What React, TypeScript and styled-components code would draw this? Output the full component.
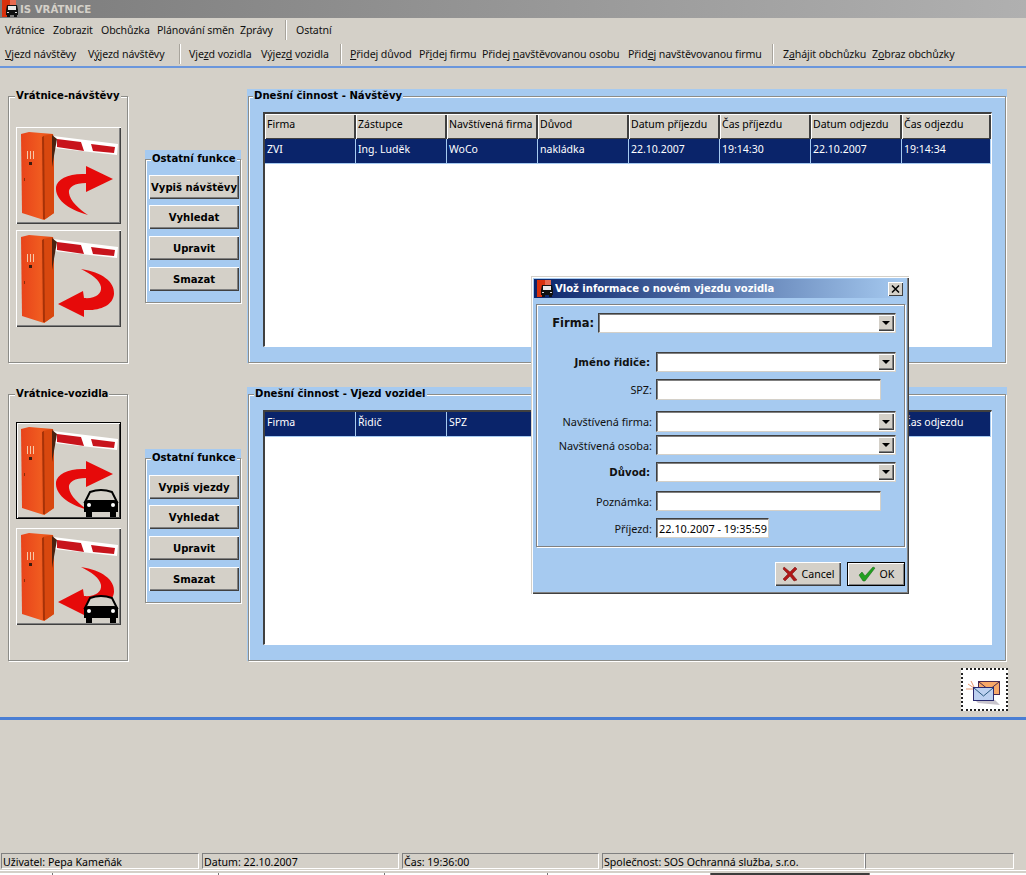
import styled, { createGlobalStyle } from "styled-components";

const FACE = "#d4d0c8";
const BLUE = "#a6caf0";
const NAVY = "#0a246a";

const GlobalStyle = createGlobalStyle`
  html, body { margin: 0; padding: 0; background: ${FACE}; }
  body { font-family: "Noto Sans", "DejaVu Sans", sans-serif; font-size: 11px; color: #000; }
`;

function TruckLogo() {
  return (
    <svg width="17" height="18" viewBox="0 0 17 18">
      <rect x="0" y="0" width="8" height="17" fill="#d8300c" />
      <rect x="8" y="0" width="6" height="5" fill="#e86a50" />
      <path d="M5 5h10l1 5v5h-1v2h-3v-2H8v2H5v-2H4v-5z" fill="#111" />
      <rect x="6" y="6" width="8" height="4" fill="#e8e8e8" />
      <rect x="5" y="12" width="2" height="1" fill="#ddd" />
      <rect x="13" y="12" width="2" height="1" fill="#ddd" />
    </svg>
  );
}

function Barrier({ out, car }: { out?: boolean; car?: boolean }) {
  return (
    <svg width="103" height="94" viewBox="0 0 103 94">
      <defs>
        <linearGradient id="cabFront" x1="0" x2="1" y1="0" y2="0">
          <stop offset="0" stopColor="#e8431a" />
          <stop offset="0.6" stopColor="#f05c20" />
          <stop offset="1" stopColor="#e0440f" />
        </linearGradient>
      </defs>
      <path d="M36 7 L101 15 L100 26 L37 19 Z" fill="#fff" />
      <path d="M40 10 L64 13 L67 22 L40 18 Z" fill="#c8141c" />
      <path d="M74 15 L98 18 L97 24 L76 22 Z" fill="#c8141c" />
      <path d="M4 5 L12 3 L36 5 L37 10 L37 84 L27 91 L5 84 Z" fill="url(#cabFront)" />
      <path d="M26 7 L36 5 L37 84 L27 91 Z" fill="#d8480f" />
      <path d="M25 8 L27 7 L28 90 L26 90 Z" fill="#a63208" />
      <path d="M35 6 L40 10 L35 38 Z" fill="#4a2210" />
      <path d="M10 22 h1 v8 h-1z M13 22 h1 v8 h-1z M16 22 h1 v8 h-1z" fill="#f6c8a8" />
      <rect x="12" y="33" width="3" height="3" fill="#3a1c10" />
      <rect x="7" y="49" width="1" height="3" fill="#8a2c08" />
      {out ? (
        <path d="M71 86 C50 80 38 70 39 58 C40 50 52 44 69 45 L69 37 L96 50 L69 63 L69 54 C58 54 51 58 52 64 C53 72 62 80 71 86 Z" fill="#e60a0a" />
      ) : (
        <path d="M64 37 C85 40 98 50 97 62 C96 74 82 79 67 78 L67 85 L41 72 L66 59 L67 66 C78 67 85 62 84 55 C83 48 74 42 64 37 Z" fill="#e60a0a" />
      )}
      {car && (
        <g>
          <path d="M73 68 Q84 64 95 68 L100 78 L68 78 Z" fill={FACE} stroke="#000" strokeWidth="2" />
          <path d="M67 78 Q68 76 71 76 L97 76 Q101 76 101 79 L101 88 L67 88 Z" fill="#000" />
          <rect x="69" y="87" width="6" height="6" fill="#000" />
          <rect x="93" y="87" width="6" height="6" fill="#000" />
          <circle cx="72" cy="81" r="2" fill="#fff" />
          <circle cx="96" cy="81" r="2" fill="#fff" />
        </g>
      )}
    </svg>
  );
}

function MailIcon() {
  return (
    <svg width="43" height="39" viewBox="0 0 43 39">
      <path d="M5 14 l6 4 M8 11 l3 6 M3 19 h8" stroke="#e89a70" strokeWidth="1" fill="none" />
      <rect x="15.5" y="11.5" width="21" height="13" fill="#f7a868" stroke="#4a2a50" />
      <path d="M16 12 L26 20 L36 12" fill="none" stroke="#4a2a50" />
      <path d="M12 30 L32 30 L37 35 L15 33 Z" fill="#c8c4cc" />
      <rect x="10.5" y="17.5" width="20" height="13" fill="#bcd0f0" stroke="#2a2a70" />
      <path d="M11 18 L20.5 26 L30 18" fill="none" stroke="#2a5a80" />
    </svg>
  );
}

const Page = styled.div`
  width: 1026px;
  height: 875px;
  overflow: hidden;
  position: relative;
  display: flex;
  flex-direction: column;
  background: ${FACE};
`;

const TitleBar = styled.div`
  height: 18px;
  display: flex;
  align-items: center;
  padding-left: 2px;
  background: linear-gradient(90deg, #7c7c7c, #b0b0b0);
`;

const TitleText = styled.span`
  font-family: "DejaVu Sans", sans-serif;
  font-weight: bold;
  font-size: 10.2px;
  color: #d4d0c8;
  margin-left: 1px;
`;

const MenuRow = styled.div`
  height: 24px;
  display: flex;
  align-items: center;
  padding-left: 5px;
`;

const Item = styled.span<{ $w: number }>`
  width: ${(p) => p.$w}px;
  flex: none;
  white-space: nowrap;
  font-size: 10.6px;
  letter-spacing: -0.1px;
  color: #111;
`;

const Sep = styled.span<{ $w: number }>`
  width: ${(p) => p.$w}px;
  flex: none;
  height: 20px;
  &::before {
    content: "";
    display: block;
    width: 1px;
    height: 20px;
    margin-left: ${(p) => Math.round(p.$w / 2) - 2}px;
    background: #fff;
    box-shadow: -1px 0 0 #a8a49c;
  }
`;

const Line = styled.div<{ $color: string; $height: number }>`
  height: ${(p) => p.$height}px;
  flex: none;
  background: ${(p) => p.$color};
`;

const Main = styled.div`
  padding: 22px 0 0 8px;
  display: flex;
  flex-direction: column;
  gap: 25px;
`;

const Row = styled.div`
  display: grid;
  grid-template-columns: 137px 102px 760px;
  height: 273px;
`;

const GroupBox = styled.fieldset<{ $blue?: boolean }>`
  margin: 0;
  min-width: 0;
  border: 1px solid #8c8c88;
  box-shadow: inset 1px 1px 0 #fff, 1px 1px 0 #fff;
  background: ${(p) => (p.$blue ? BLUE : "transparent")};
`;

const Legend = styled.legend<{ $blue?: boolean; $left: number }>`
  font-family: "DejaVu Sans", sans-serif;
  font-weight: bold;
  font-size: 10.1px;
  line-height: 12px;
  white-space: nowrap;
  padding: 0 1px;
  margin-left: ${(p) => p.$left}px;
  background: ${(p) => (p.$blue ? BLUE : FACE)};
  position: relative;
  color: #000;
`;

const GateBox = styled(GroupBox)<{ $top: number; $gap: number }>`
  width: 120px;
  padding: ${(p) => p.$top}px 0 0 7px;
  display: flex;
  flex-direction: column;
  gap: ${(p) => p.$gap}px;
  height: 100%;
  box-sizing: border-box;
`;

const GateButton = styled.button<{ $focused?: boolean }>`
  width: 105px;
  height: 97px;
  padding: 0;
  flex: none;
  display: block;
  background: ${FACE};
  border: none;
  box-shadow: ${(p) =>
    p.$focused
      ? "inset 0 0 0 1px #000, inset 2px 2px 0 #fff, inset -2px -2px 0 #404040"
      : "inset 1px 1px 0 #fff, inset -1px -1px 0 #404040, inset -2px -2px 0 #808080"};
  svg { display: block; margin: 1px 0 0 1px; }
`;

const BluePanel = styled.div<{ $top: number; $height: number }>`
  width: 96px;
  margin-top: ${(p) => p.$top}px;
  height: ${(p) => p.$height}px;
  padding-top: 3px;
  background: ${BLUE};
  box-sizing: border-box;
  display: flex;
`;

const FuncBox = styled(GroupBox)`
  flex: 1;
  padding: 4px 0 0 3px;
  display: flex;
  flex-direction: column;
  box-sizing: border-box;
`;

const FuncButton = styled.button<{ $top: number }>`
  width: 90px;
  height: 24px;
  flex: none;
  margin-top: ${(p) => p.$top}px;
  padding: 0;
  border: none;
  background: ${FACE};
  font-family: "DejaVu Sans", sans-serif;
  font-weight: bold;
  font-size: 10.1px;
  white-space: nowrap;
  color: #000;
  box-shadow: inset 1px 1px 0 #fff, inset -1px -1px 0 #404040, inset -2px -2px 0 #808080;
`;

const TablePanel = styled.div`
  background: ${BLUE};
  height: 274px;
  margin-top: -1px;
  padding: 1px 1px 0;
  box-sizing: border-box;
  display: flex;
`;

const TableBox = styled(GroupBox)`
  flex: 1;
  padding: 10px 13px 15px 14px;
  box-sizing: border-box;
  display: flex;
  min-height: 0;
`;

const Grid = styled.div`
  flex: 1;
  background: #fff;
  border-top: 2px solid #404040;
  border-left: 2px solid #404040;
  border-right: 1px solid #fff;
  border-bottom: 1px solid #fff;
`;

const GridRow = styled.div`
  display: grid;
  grid-template-columns: repeat(7, 91px) 89px;
  height: 25px;
`;

const Cell = styled.div<{ $kind: "head" | "navy" }>`
  padding-left: 2px;
  line-height: 20px;
  white-space: nowrap;
  overflow: hidden;
  box-sizing: border-box;
  font-size: 10.5px;
  color: ${(p) => (p.$kind === "head" ? "#000" : "#fff")};
  background: ${(p) => (p.$kind === "head" ? FACE : NAVY)};
  box-shadow: ${(p) =>
    p.$kind === "head"
      ? "inset 1px 1px 0 #fff, inset -1px -1px 0 #404040, inset -2px 0 0 #404040"
      : "inset -1px 0 0 #a6caf0, inset 0 -1px 0 #a6caf0"};
`;

const MailRow = styled.div`
  display: flex;
  justify-content: flex-end;
  padding: 7px 18px 6px 0;
`;

const MailButton = styled.button`
  width: 47px;
  height: 43px;
  padding: 0;
  border: 2px dotted #222;
  background: #fff;
  display: flex;
  align-items: center;
  justify-content: center;
`;

const StatusBar = styled.div`
  margin-top: auto;
  height: 17px;
  display: flex;
  padding: 0 0 0 1px;
  border-bottom: 1px solid #fff;
`;

const Pane = styled.div<{ $w: number; $gap: number }>`
  width: ${(p) => p.$w}px;
  flex: none;
  height: 16px;
  margin-right: ${(p) => p.$gap}px;
  box-sizing: border-box;
  padding-left: 1px;
  line-height: 16px;
  font-size: 10.6px;
  white-space: nowrap;
  border-top: 1px solid #808080;
  border-left: 1px solid #808080;
  border-right: 1px solid #fff;
  border-bottom: 1px solid #fff;
`;

const TaskStrip = styled.div`
  margin-top: 2px;
  height: 2px;
  display: flex;
  background: #fff;
`;

const TaskPiece = styled.div<{ $w: number; $dark?: boolean }>`
  width: ${(p) => p.$w}px;
  flex: none;
  background: ${(p) => (p.$dark ? "#3c3c3c" : "transparent")};
  border-right: 1px solid #777;
  box-sizing: border-box;
`;

const Dialog = styled.div`
  position: absolute;
  left: 531px;
  top: 276px;
  width: 378px;
  height: 318px;
  box-sizing: border-box;
  padding: 3px 4px 0 3px;
  background: ${BLUE};
  box-shadow: inset 1px 1px 0 ${FACE}, inset 2px 2px 0 #fff, inset -1px -1px 0 #404040, inset -2px -2px 0 #808080;
`;

const DialogTitle = styled.div`
  height: 19px;
  display: flex;
  align-items: center;
  padding-left: 3px;
  background: linear-gradient(90deg, ${NAVY}, ${BLUE});
  font-family: "DejaVu Sans", sans-serif;
  font-weight: bold;
  font-size: 10px;
  color: #fff;
  white-space: nowrap;
`;

const TitleLogo = styled.span`
  flex: none;
  width: 18px;
  display: flex;
`;

const CloseButton = styled.button`
  margin-left: auto;
  margin-right: 2px;
  width: 15px;
  height: 14px;
  padding: 0;
  border: none;
  background: ${FACE};
  box-shadow: inset 1px 1px 0 #fff, inset -1px -1px 0 #404040;
  display: flex;
  align-items: center;
  justify-content: center;
`;

const FormPanel = styled.div`
  margin: 6px 0 0 2px;
  width: 369px;
  height: 243px;
  box-sizing: border-box;
  padding-top: 8px;
  border: 1px solid #808080;
  box-shadow: inset 1px 1px 0 #fff, 1px 1px 0 #fff;
`;

const FieldRow = styled.div<{ $top: number; $height: number; $label: number }>`
  margin-top: ${(p) => p.$top}px;
  height: ${(p) => p.$height}px;
  display: grid;
  grid-template-columns: ${(p) => p.$label}px auto;
  column-gap: 4px;
  justify-content: start;
  align-items: center;
`;

const Label = styled.label<{ $bold?: boolean; $big?: boolean }>`
  text-align: right;
  white-space: nowrap;
  color: #111;
  font-family: ${(p) => (p.$bold ? '"DejaVu Sans", sans-serif' : "inherit")};
  font-weight: ${(p) => (p.$bold ? "bold" : "normal")};
  font-size: ${(p) => (p.$big ? 11.5 : p.$bold ? 10.2 : 10.9)}px;
  padding-right: ${(p) => (p.$bold && !p.$big ? 2 : 0)}px;
`;

const Sunken = styled.div<{ $w: number }>`
  width: ${(p) => p.$w}px;
  height: 100%;
  box-sizing: border-box;
  display: flex;
  justify-content: flex-end;
  align-items: center;
  background: #fff;
  border-top: 1px solid #404040;
  border-left: 1px solid #404040;
  border-right: 1px solid ${FACE};
  border-bottom: 1px solid ${FACE};
  box-shadow: inset 1px 1px 0 #808080;
  overflow: hidden;
`;

const DateText = styled.span`
  flex: 1;
  padding-left: 2px;
  white-space: nowrap;
  font-size: 10.9px;
  overflow: hidden;
  margin-right: 1px;
`;

const ComboArrow = styled.span`
  width: 16px;
  height: calc(100% - 2px);
  margin-right: 1px;
  background: ${FACE};
  box-shadow: inset 1px 1px 0 #fff, inset -1px -1px 0 #404040, inset -2px -2px 0 #808080;
  display: flex;
  align-items: center;
  justify-content: center;
  &::after {
    content: "";
    border-left: 4px solid transparent;
    border-right: 4px solid transparent;
    border-top: 4px solid #000;
  }
`;

const DialogFooter = styled.div`
  display: flex;
  justify-content: flex-end;
  gap: 6px;
  margin-top: 15px;
`;

const DialogButton = styled.button<{ $w: number; $default?: boolean }>`
  width: ${(p) => p.$w}px;
  height: 24px;
  padding: 0;
  display: flex;
  align-items: center;
  justify-content: center;
  gap: 4px;
  border: none;
  background: ${FACE};
  font-family: inherit;
  font-size: 10.6px;
  color: #000;
  box-shadow: ${(p) =>
    p.$default
      ? "inset 0 0 0 1px #000, inset 2px 2px 0 #fff, inset -2px -2px 0 #808080"
      : "inset 1px 1px 0 #fff, inset -1px -1px 0 #404040, inset -2px -2px 0 #808080"};
`;

const visitHead = ["Firma", "Zástupce", "Navštívená firma", "Důvod", "Datum příjezdu", "Čas příjezdu", "Datum odjezdu", "Čas odjezdu"];
const visitRow = ["ZVI", "Ing. Luděk", "WoCo", "nakládka", "22.10.2007", "19:14:30", "22.10.2007", "19:14:34"];
// the middle columns sit behind the dialog in the screenshot
const carHead = ["Firma", "Řidič", "SPZ", "", "", "", "", "Čas odjezdu"];

const menu: [string, number][] = [["Vrátnice", 48], ["Zobrazit", 48], ["Obchůzka", 56], ["Plánování směn", 83]];

export default function App() {
  return (
    <Page>
      <GlobalStyle />
      <TitleBar>
        <TruckLogo />
        <TitleText>IS VRÁTNICE</TitleText>
      </TitleBar>

      <MenuRow>
        {menu.map(([t, w]) => (
          <Item key={t} $w={w}>{t}</Item>
        ))}
        <Item $w={39}>Zprávy</Item>
        <Sep $w={17} />
        <Item $w={40}>Ostatní</Item>
      </MenuRow>

      <MenuRow>
        <Item $w={83}><u>V</u>jezd návštěvy</Item>
        <Item $w={87}>V<u>ý</u>jezd návštěvy</Item>
        <Sep $w={14} />
        <Item $w={72}>Vje<u>z</u>d vozidla</Item>
        <Item $w={75}>Výjez<u>d</u> vozidla</Item>
        <Sep $w={14} />
        <Item $w={69}><u>P</u>řidej důvod</Item>
        <Item $w={63}>Př<u>i</u>dej firmu</Item>
        <Item $w={146}>Přidej <u>n</u>avštěvovanou osobu</Item>
        <Item $w={139}>Přid<u>e</u>j navštěvovanou firmu</Item>
        <Sep $w={16} />
        <Item $w={89}>Z<u>a</u>hájit obchůzku</Item>
        <Item $w={90}>Z<u>o</u>braz obchůzky</Item>
      </MenuRow>
      <Line $color="#6a96dc" $height={2} />

      <Main>
        <Row>
          <GateBox $top={25} $gap={6}>
            <Legend $left={-1}>Vrátnice-návštěvy</Legend>
            <GateButton><Barrier out /></GateButton>
            <GateButton><Barrier /></GateButton>
          </GateBox>
          <BluePanel $top={60} $height={153}>
            <FuncBox $blue>
              <Legend $blue $left={2}>Ostatní funkce</Legend>
              <FuncButton $top={6}>Vypiš návštěvy</FuncButton>
              <FuncButton $top={6}>Vyhledat</FuncButton>
              <FuncButton $top={7}>Upravit</FuncButton>
              <FuncButton $top={7}>Smazat</FuncButton>
            </FuncBox>
          </BluePanel>
          <TablePanel>
            <TableBox $blue>
              <Legend $blue $left={-10}>Dnešní činnost - Návštěvy</Legend>
              <Grid>
                <GridRow>
                  {visitHead.map((t) => <Cell key={t} $kind="head">{t}</Cell>)}
                </GridRow>
                <GridRow>
                  {visitRow.map((t, i) => <Cell key={i} $kind="navy">{t}</Cell>)}
                </GridRow>
              </Grid>
            </TableBox>
          </TablePanel>
        </Row>

        <Row>
          <GateBox $top={22} $gap={9}>
            <Legend $left={-1}>Vrátnice-vozidla</Legend>
            <GateButton $focused><Barrier out car /></GateButton>
            <GateButton><Barrier car /></GateButton>
          </GateBox>
          <BluePanel $top={61} $height={154}>
            <FuncBox $blue>
              <Legend $blue $left={2}>Ostatní funkce</Legend>
              <FuncButton $top={7}>Vypiš vjezdy</FuncButton>
              <FuncButton $top={6}>Vyhledat</FuncButton>
              <FuncButton $top={7}>Upravit</FuncButton>
              <FuncButton $top={7}>Smazat</FuncButton>
            </FuncBox>
          </BluePanel>
          <TablePanel>
            <TableBox $blue>
              <Legend $blue $left={-9}>Dnešní činnost - Vjezd vozidel</Legend>
              <Grid>
                <GridRow>
                  {carHead.map((t, i) => <Cell key={i} $kind="navy">{t}</Cell>)}
                </GridRow>
              </Grid>
            </TableBox>
          </TablePanel>
        </Row>
      </Main>

      <MailRow>
        <MailButton><MailIcon /></MailButton>
      </MailRow>
      <Line $color="#4a7ed4" $height={3} />

      <StatusBar>
        <Pane $w={198} $gap={3}>Uživatel: Pepa Kameňák</Pane>
        <Pane $w={197} $gap={3}>Datum: 22.10.2007</Pane>
        <Pane $w={197} $gap={3}>Čas: 19:36:00</Pane>
        <Pane $w={263} $gap={0}>Společnost: SOS Ochranná služba, s.r.o.</Pane>
        <Pane $w={149} $gap={0} />
      </StatusBar>
      <TaskStrip>
        <TaskPiece $w={53} />
        <TaskPiece $w={166} />
        <TaskPiece $w={166} />
        <TaskPiece $w={163} />
        <TaskPiece $w={163} />
        <TaskPiece $w={159} $dark />
      </TaskStrip>

      <Dialog>
        <DialogTitle>
          <TitleLogo><TruckLogo /></TitleLogo>
          Vlož informace o novém vjezdu vozidla
          <CloseButton>
            <svg width="9" height="8" viewBox="0 0 9 8">
              <path d="M1 0.5 L8 7.5 M8 0.5 L1 7.5" stroke="#000" strokeWidth="1.5" />
            </svg>
          </CloseButton>
        </DialogTitle>
        <FormPanel>
          <FieldRow $top={0} $height={20} $label={57}>
            <Label $bold $big>Firma:</Label>
            <Sunken $w={298}><ComboArrow /></Sunken>
          </FieldRow>
          <FieldRow $top={19} $height={20} $label={115}>
            <Label $bold>Jméno řidiče:</Label>
            <Sunken $w={240}><ComboArrow /></Sunken>
          </FieldRow>
          <FieldRow $top={7} $height={21} $label={115}>
            <Label>SPZ:</Label>
            <Sunken $w={225} />
          </FieldRow>
          <FieldRow $top={11} $height={21} $label={115}>
            <Label>Navštívená firma:</Label>
            <Sunken $w={240}><ComboArrow /></Sunken>
          </FieldRow>
          <FieldRow $top={3} $height={20} $label={115}>
            <Label>Navštívená osoba:</Label>
            <Sunken $w={240}><ComboArrow /></Sunken>
          </FieldRow>
          <FieldRow $top={7} $height={20} $label={115}>
            <Label $bold>Důvod:</Label>
            <Sunken $w={240}><ComboArrow /></Sunken>
          </FieldRow>
          <FieldRow $top={9} $height={20} $label={115}>
            <Label>Poznámka:</Label>
            <Sunken $w={225} />
          </FieldRow>
          <FieldRow $top={7} $height={20} $label={115}>
            <Label>Příjezd:</Label>
            <Sunken $w={113}><DateText>22.10.2007 - 19:35:59</DateText></Sunken>
          </FieldRow>
        </FormPanel>
        <DialogFooter>
          <DialogButton $w={66}>
            <svg width="16" height="16" viewBox="0 0 16 16">
              <path d="M2 1 L8 6 L13 1 L15 3 L10 8 L15 14 L12 15 L8 10 L3 15 L1 13 L6 8 L1 3 Z" fill="#b01818" stroke="#701010" strokeWidth="0.5" />
            </svg>
            Cancel
          </DialogButton>
          <DialogButton $w={58} $default>
            <svg width="18" height="16" viewBox="0 0 18 16">
              <path d="M1 9 L4 6 L7 10 L15 1 L17 2 L7 15 L5 15 Z" fill="#22a020" stroke="#106010" strokeWidth="0.5" />
            </svg>
            OK
          </DialogButton>
        </DialogFooter>
      </Dialog>
    </Page>
  );
}
